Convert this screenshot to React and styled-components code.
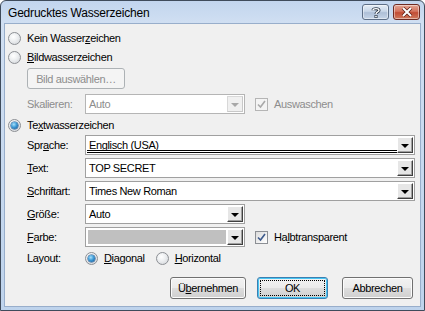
import React from "react";
import styled, { createGlobalStyle, css } from "styled-components";

const GlobalStyle = createGlobalStyle`
  html, body {
    margin: 0;
    padding: 0;
    background: #ffffff;
  }
  * {
    box-sizing: border-box;
  }
`;

const Window = styled.div`
  width: 425px;
  height: 311px;
  display: flex;
  flex-direction: column;
  border: 1px solid #3f4b5b;
  border-radius: 6px 6px 0 0;
  background: linear-gradient(#c2d5ee 0px, #d0dff2 22px, #bed3ec 100%);
  font-family: "Liberation Sans", Arial, sans-serif;
  font-size: 11px;
  letter-spacing: -0.35px;
  color: #000;
  overflow: hidden;
`;

const TitleBar = styled.div`
  height: 22px;
  display: flex;
  align-items: flex-start;
  padding: 0 4px 0 7px;
`;

const Title = styled.div`
  flex: 1;
  font-size: 12px;
  line-height: 12px;
  letter-spacing: -0.2px;
  padding-top: 6px;
  color: #000;
`;

const CaptionButtons = styled.div`
  display: flex;
  gap: 4px;
  padding-top: 3px;
`;

const CaptionButton = styled.div`
  width: 27px;
  height: 16px;
  border: 1px solid ${(p) => (p.$close ? "#6e2a22" : "#5d6e86")};
  border-radius: 3px;
  display: flex;
  align-items: center;
  justify-content: center;
  box-shadow: inset 0 0 0 1px rgba(255, 255, 255, 0.45);
  background: ${(p) =>
    p.$close
      ? "linear-gradient(#e3a493 0%, #d4735e 45%, #c24c35 55%, #cf7a5e 100%)"
      : "linear-gradient(#e6edf6 0%, #c8d6e8 45%, #aebfd7 55%, #c6d5e8 100%)"};
`;

const Client = styled.div`
  flex: 1;
  margin: 0 3px 3px 3px;
  border: 1px solid #98aecb;
  background: #f0f0f0;
  padding: 6px 0 0 3px;
  display: flex;
  flex-direction: column;
`;

const Row = styled.div`
  display: flex;
  align-items: center;
  height: ${(p) => p.$h || 16}px;
  margin-top: ${(p) => p.$mt || 0}px;
  padding-left: ${(p) => p.$indent || 0}px;
`;

const Label = styled.span`
  width: ${(p) => p.$w || 58}px;
  flex-shrink: 0;
  color: ${(p) => (p.$disabled ? "#8d8d8d" : "#000")};
`;

const Option = styled.label`
  display: inline-flex;
  align-items: center;
  gap: 6px;
  margin-right: ${(p) => p.$mr || 0}px;
  color: ${(p) => (p.$disabled ? "#8d8d8d" : "#000")};
  margin-left: ${(p) => p.$ml || 0}px;
`;

const Radio = styled.span`
  width: 13px;
  height: 13px;
  border-radius: 50%;
  border: 1px solid #8c8f94;
  background: radial-gradient(circle at 40% 35%, #ffffff 0%, #eef0f2 40%, #cfd2d6 100%);
  display: inline-flex;
  align-items: center;
  justify-content: center;
  flex-shrink: 0;

  ${(p) =>
    p.$checked &&
    css`
      &::after {
        content: "";
        width: 7px;
        height: 7px;
        border-radius: 50%;
        background: radial-gradient(circle at 40% 35%, #a9e1fb 0%, #3e9ad6 45%, #0f4d8c 100%);
        box-shadow: 0 0 0 0.5px #1c4f86;
      }
    `}
`;

const Check = styled.span`
  width: 13px;
  height: 13px;
  border: 1px solid ${(p) => (p.$disabled ? "#b5b5b5" : "#8c8f94")};
  background: ${(p) =>
    p.$disabled ? "#f4f4f4" : "linear-gradient(135deg, #dcdcdc, #ffffff)"};
  display: inline-flex;
  align-items: center;
  justify-content: center;
  flex-shrink: 0;
`;

const PushButton = styled.button`
  font: inherit;
  letter-spacing: inherit;
  height: ${(p) => p.$h || 22}px;
  width: ${(p) => p.$w}px;
  margin-left: ${(p) => p.$ml || 0}px;
  padding: 0;
  border: 1px solid ${(p) => (p.$default ? "#3c7fb1" : p.$disabled ? "#adb2b5" : "#707070")};
  border-radius: 3px;
  color: ${(p) => (p.$disabled ? "#8d8d8d" : "#000")};
  background: ${(p) =>
    p.$disabled
      ? "#f4f4f4"
      : "linear-gradient(#f2f2f2 0%, #ebebeb 48%, #dddddd 52%, #cfcfcf 100%)"};
  box-shadow: inset 0 0 0 1px ${(p) => (p.$default ? "#48c6f3" : p.$disabled ? "#f4f4f4" : "#fcfcfc")};
  position: relative;

  ${(p) =>
    p.$default &&
    css`
      &::after {
        content: "";
        position: absolute;
        inset: 2px;
        border: 1px dotted #000;
        border-radius: 1px;
      }
    `}
`;

const Combo = styled.div`
  width: ${(p) => p.$w}px;
  height: 20px;
  display: flex;
  border: 1px solid ${(p) => (p.$disabled ? "#b5b5b5" : "#a0a0a0")};
  background: #fff;
  padding: 1px;
`;

const ComboField = styled.div`
  flex: 1;
  display: flex;
  align-items: center;
  padding-left: 2px;
  color: ${(p) => (p.$disabled ? "#8d8d8d" : "#000")};
  ${(p) =>
    p.$double &&
    css`
      border-bottom: 3px double #000;
      padding-top: 2px;
    `}
`;

const Swatch = styled.div`
  flex: 1;
  margin: 1px;
  background: #c0c0c0;
`;

const DropButton = styled.div`
  width: 16px;
  display: flex;
  align-items: center;
  justify-content: center;
  background: ${(p) => (p.$disabled ? "#f0f0f0" : "#e6e6e6")};
  border: 1px solid;
  border-color: ${(p) =>
    p.$disabled ? "#d8d8d8 #c8c8c8 #c8c8c8 #d8d8d8" : "#ffffff #404040 #404040 #ffffff"};
  box-shadow: ${(p) => (p.$disabled ? "none" : "inset -1px -1px 0 #a0a0a0")};

  &::after {
    content: "";
    border-left: 4px solid transparent;
    border-right: 4px solid transparent;
    border-top: 4px solid ${(p) => (p.$disabled ? "#a8a8a8" : "#000")};
    margin-top: 1px;
  }
`;

const FormGrid = styled.div`
  display: flex;
  flex-direction: column;
  gap: 3px;
  margin-top: 2px;
`;

const Footer = styled.div`
  display: flex;
  justify-content: flex-end;
  margin-top: 11px;
  padding-right: 7px;
`;

const U = styled.span`
  text-decoration: underline;
  text-underline-offset: 1px;
`;

const CheckMark = ({ disabled }) => (
  <svg width="9" height="9" viewBox="0 0 9 9">
    <path
      d="M1 4.5 L3.5 7 L8 1"
      fill="none"
      stroke={disabled ? "#a9a9a9" : "#3d5a8c"}
      strokeWidth="1.6"
    />
  </svg>
);

const Dropdown = ({ w, disabled, double, swatch, children }) => (
  <Combo $w={w} $disabled={disabled}>
    {swatch ? (
      <Swatch />
    ) : (
      <ComboField $disabled={disabled} $double={double}>
        {children}
      </ComboField>
    )}
    <DropButton $disabled={disabled} />
  </Combo>
);

export default function App() {
  return (
    <>
      <GlobalStyle />
      <Window>
        <TitleBar>
          <Title>Gedrucktes Wasserzeichen</Title>
          <CaptionButtons>
            <CaptionButton>
              <svg width="10" height="11" viewBox="0 0 10 11">
                <path
                  d="M2 3.2 C2 1.2 8 1 8 3.4 C8 5 5 5 5 7"
                  fill="none"
                  stroke="#2b3848"
                  strokeWidth="3"
                />
                <path
                  d="M2 3.2 C2 1.2 8 1 8 3.4 C8 5 5 5 5 7"
                  fill="none"
                  stroke="#ffffff"
                  strokeWidth="1.4"
                />
                <rect x="3.5" y="8" width="3" height="3" fill="#2b3848" />
                <rect x="4.2" y="8.7" width="1.6" height="1.6" fill="#fff" />
              </svg>
            </CaptionButton>
            <CaptionButton $close>
              <svg width="12" height="10" viewBox="0 0 12 10">
                <path d="M2 1 L10 9 M10 1 L2 9" stroke="#5a1a12" strokeWidth="3.4" />
                <path d="M2 1 L10 9 M10 1 L2 9" stroke="#ffffff" strokeWidth="2" />
              </svg>
            </CaptionButton>
          </CaptionButtons>
        </TitleBar>

        <Client>
          <Row>
            <Option>
              <Radio />
              <span>
                Kein Wasser<U>z</U>eichen
              </span>
            </Option>
          </Row>
          <Row $mt={3}>
            <Option>
              <Radio />
              <span>
                <U>B</U>ildwasserzeichen
              </span>
            </Option>
          </Row>
          <Row $mt={3} $h={21} $indent={19}>
            <PushButton $w={98} $h={21} $disabled>
              Bild auswählen…
            </PushButton>
          </Row>
          <Row $mt={5} $h={20} $indent={19}>
            <Label $disabled>Skalieren:</Label>
            <Dropdown w={160} disabled>
              Auto
            </Dropdown>
            <Option $ml={10} $disabled>
              <Check $disabled>
                <CheckMark disabled />
              </Check>
              <span>Auswaschen</span>
            </Option>
          </Row>
          <Row $mt={3}>
            <Option>
              <Radio $checked />
              <span>
                Te<U>x</U>twasserzeichen
              </span>
            </Option>
          </Row>

          <FormGrid>
            <Row $h={20} $indent={19}>
              <Label>
                Spr<U>a</U>che:
              </Label>
              <Dropdown w={330} double>
                Englisch (USA)
              </Dropdown>
            </Row>
            <Row $h={20} $indent={19}>
              <Label>
                <U>T</U>ext:
              </Label>
              <Dropdown w={330}>TOP SECRET</Dropdown>
            </Row>
            <Row $h={20} $indent={19}>
              <Label>
                <U>S</U>chriftart:
              </Label>
              <Dropdown w={330}>Times New Roman</Dropdown>
            </Row>
            <Row $h={20} $indent={19}>
              <Label>
                <U>G</U>röße:
              </Label>
              <Dropdown w={160}>Auto</Dropdown>
            </Row>
            <Row $h={20} $indent={19}>
              <Label>
                <U>F</U>arbe:
              </Label>
              <Dropdown w={160} swatch />
              <Option $ml={10}>
                <Check>
                  <CheckMark />
                </Check>
                <span>
                  Ha<U>l</U>btransparent
                </span>
              </Option>
            </Row>
            <Row $h={16} $indent={19}>
              <Label>Layout:</Label>
              <Option $mr={11}>
                <Radio $checked />
                <span>
                  <U>D</U>iagonal
                </span>
              </Option>
              <Option>
                <Radio />
                <span>
                  <U>H</U>orizontal
                </span>
              </Option>
            </Row>
          </FormGrid>

          <Footer>
            <PushButton $w={76}>
              Ü<U>b</U>ernehmen
            </PushButton>
            <PushButton $w={71} $ml={11} $default>
              OK
            </PushButton>
            <PushButton $w={71} $ml={14}>
              Abbrechen
            </PushButton>
          </Footer>
        </Client>
      </Window>
    </>
  );
}
